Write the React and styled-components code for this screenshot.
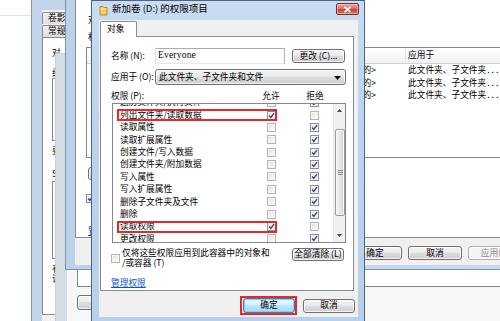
import React from "react";
import styled, { createGlobalStyle, css } from "styled-components";

const FONT = `"Noto Sans CJK SC", "Liberation Sans", sans-serif`;

const GlobalStyle = createGlobalStyle`
  *, *::before, *::after { box-sizing: border-box; }
  html, body { margin: 0; padding: 0; }
  body { background: #ffffff; font-family: ${FONT}; font-size: 8.7px; line-height: 1.2; color: #000; }
`;

const Desktop = styled.div`
  position: relative;
  width: 500px;
  height: 321px;
  overflow: hidden;
  background: #ffffff;
`;

const Explorer = styled.div`
  position: absolute;
  left: 0;
  top: 0;
  width: 500px;
  height: 321px;
  background: #fff;
`;

const AddressBar = styled.div`
  height: 16px;
  border-bottom: 1px solid #dcdfe4;
`;

const Frame = styled.div`
  position: absolute;
  left: ${(p) => p.$x}px;
  top: ${(p) => p.$y}px;
  width: ${(p) => p.$w}px;
  height: ${(p) => p.$h}px;
  display: flex;
  flex-direction: column;
  border: 1px solid ${(p) => p.$edge};
  background: ${(p) => p.$glass};
  padding: 0 ${(p) => p.$r}px ${(p) => p.$b}px ${(p) => p.$l}px;
`;

const Caption = styled.div`
  flex: none;
  position: relative;
  height: ${(p) => p.$h}px;
  display: flex;
  align-items: center;
  gap: 4px;
  font-size: 9.5px;
  color: #000;
`;

const TitleText = styled.span`
  margin-bottom: 4px;
  white-space: nowrap;
`;

const CloseBtn = styled.div`
  position: absolute;
  right: -1px;
  top: 2px;
  width: 23px;
  height: 12px;
  border: 1px solid #7a2f28;
  border-radius: 2px;
  background: linear-gradient(#e8a596 0%, #d8776a 45%, #c34a3c 55%, #d2755d 100%);
  box-shadow: inset 0 0 0 1px rgba(255, 220, 210, 0.55);
  display: flex;
  align-items: center;
  justify-content: center;
`;

const Client = styled.div`
  flex: 1;
  min-height: 0;
  display: flex;
  flex-direction: column;
  background: ${(p) => p.$bg || "#f0f0f0"};
  padding: ${(p) => p.$pad || "0"};
  overflow: hidden;
`;

/* ---------- shared controls ---------- */

const Btn = styled.div`
  position: relative;
  flex: none;
  width: ${(p) => p.$w}px;
  height: ${(p) => p.$h || 14}px;
  border: 1px solid #707070;
  border-radius: 3px;
  background: linear-gradient(#f4f4f4 0%, #ebebeb 45%, #dddddd 50%, #cfcfcf 100%);
  box-shadow: inset 0 0 0 1px rgba(255, 255, 255, 0.75);
  display: flex;
  align-items: center;
  justify-content: center;
  white-space: nowrap;
  color: #000;
  ${(p) =>
    p.$default &&
    css`
      border-color: #3c7fb1;
      background: linear-gradient(#eaf6fd 0%, #d9f0fc 45%, #bee6fd 50%, #a7d9f5 100%);
      box-shadow: inset 0 0 0 1px #7fd0f8;
    `}
  ${(p) =>
    p.$disabled &&
    css`
      color: #8d8d8d;
      border-color: #adb2b5;
      background: #f4f4f4;
    `}
  ${(p) =>
    p.$marked &&
    css`
      &::after {
        content: "";
        position: absolute;
        left: -4px;
        right: -3px;
        top: -3px;
        bottom: -3px;
        border: 2px solid #e6282c;
      }
    `}
`;

const Box = styled.span`
  flex: none;
  width: 9px;
  height: 9px;
  border: 1px solid ${(p) => (p.$on ? "#8e8f8f" : "#b4b4b4")};
  background: linear-gradient(135deg, #dedede 0%, #f2f2f2 60%, #fbfbfb 100%);
  box-shadow: inset 0 0 0 1px #f6f6f6;
  display: inline-flex;
  align-items: center;
  justify-content: center;
  margin-top: ${(p) => p.$mt || 0}px;
`;

function CheckBox({ on, mt }) {
  return (
    <Box $on={on} $mt={mt}>
      {on && (
        <svg width="7" height="7" viewBox="0 0 7 7">
          <path d="M1 3.6 L2.8 5.5 L6 1.2" fill="none" stroke="#2d4a86" strokeWidth="1.4" />
        </svg>
      )}
    </Box>
  );
}

/* ---------- front dialog ---------- */

const FolderIcon = () => (
  <svg width="9" height="11" viewBox="0 0 9 11">
    <path d="M1 1.5 H4 L5 2.5 H8 V10 H1 Z" fill="#f0cd62" stroke="#b98d22" strokeWidth="1" />
    <path d="M1.5 4 H7.5" stroke="#fbe7a3" strokeWidth="1" />
  </svg>
);

const TabStrip = styled.div`
  flex: none;
  height: 15px;
  display: flex;
  position: relative;
  z-index: 1;
`;

const Tab = styled.div`
  width: ${(p) => p.$w}px;
  height: 16px;
  padding-left: 6px;
  display: flex;
  align-items: center;
  background: #fff;
  border: 1px solid #898c95;
  border-bottom: none;
  border-radius: 2px 2px 0 0;
`;

const Panel = styled.div`
  flex: none;
  height: 255px;
  background: #fff;
  border: 1px solid #898c95;
  display: flex;
  flex-direction: column;
  padding: 11px 7px 0 10px;
`;

const FieldRow = styled.div`
  flex: none;
  display: flex;
  align-items: center;
  height: 16px;
  margin-top: ${(p) => p.$mt || 0}px;
`;

const Label = styled.span`
  flex: none;
  width: 44px;
  white-space: nowrap;
`;

const TextBox = styled.div`
  width: 130px;
  height: 16px;
  border: 1px solid #abadb3;
  border-left-color: #dbdfe6;
  border-bottom-color: #e3e9ef;
  background: #fff;
  padding-left: 2px;
  display: flex;
  align-items: center;
  font-family: "Liberation Serif", serif;
  font-size: 9.5px;
  letter-spacing: 0.2px;
`;

const Combo = styled.div`
  position: relative;
  width: 191px;
  height: 16px;
  border: 1px solid #707070;
  border-radius: 3px;
  background: linear-gradient(#f4f4f4 0%, #ebebeb 45%, #dddddd 50%, #cfcfcf 100%);
  box-shadow: inset 0 0 0 1px rgba(255, 255, 255, 0.7);
  padding-left: 3px;
  display: flex;
  align-items: center;
`;

const ComboArrow = styled.span`
  position: absolute;
  right: 4px;
  top: 6px;
  line-height: 0;
`;

const PermHead = styled.div`
  flex: none;
  display: grid;
  grid-template-columns: 136px 48px 40px;
  align-items: center;
  height: 12px;
  margin-top: 5px;
  span:nth-child(n + 2) {
    text-align: center;
  }
`;

const ListBox = styled.div`
  flex: none;
  width: 234px;
  height: 140px;
  margin: 1px 0 0 1px;
  border: 1px solid #828790;
  background: #fff;
  display: flex;
  overflow: hidden;
`;

const RowsArea = styled.div`
  width: 220px;
  overflow: hidden;
`;

const RowsInner = styled.div`
  margin-top: -7.6px;
`;

const PermRow = styled.div`
  position: relative;
  display: grid;
  grid-template-columns: 133px 50px 37px;
  align-items: center;
  height: 12.4px;
  line-height: 12.4px;
  ${(p) =>
    p.$marked &&
    css`
      &::after {
        content: "";
        position: absolute;
        left: 4px;
        width: 160px;
        top: 0.6px;
        height: 12px;
        border: 2px solid #e6282c;
      }
    `}
`;

const PermName = styled.span`
  padding-left: 7px;
  white-space: nowrap;
`;

const Cell = styled.span`
  display: flex;
  justify-content: center;
`;

const VScroll = styled.div`
  width: 12px;
  display: flex;
  flex-direction: column;
  background: #f0f0f0;
  border-left: 1px solid #e8e8e8;
`;

const ScrollBtn = styled.div`
  flex: none;
  height: 13px;
  display: flex;
  align-items: center;
  justify-content: center;
`;

const Track = styled.div`
  flex: 1;
  display: flex;
  flex-direction: column;
  padding: 12px 0 13px 1px;
`;

const Thumb = styled.div`
  flex: 1;
  border: 1px solid #9a9a9a;
  border-radius: 2px;
  background: linear-gradient(90deg, #f3f3f3 0%, #e6e6e6 50%, #d8d8d8 100%);
  box-shadow: inset 0 0 0 1px #fafafa;
  display: flex;
  align-items: center;
  justify-content: center;
`;

const CheckRow = styled.div`
  flex: none;
  display: flex;
  align-items: flex-start;
  height: 20px;
  margin-top: 5px;
`;

const CheckText = styled.span`
  margin-left: 2px;
  display: flex;
  flex-direction: column;
  line-height: 10px;
  white-space: nowrap;
`;

const Link = styled.span`
  flex: none;
  margin-top: 10px;
  line-height: 10px;
  color: #0a58c6;
  text-decoration: underline;
  align-self: flex-start;
`;

const ButtonBar = styled.div`
  flex: none;
  display: flex;
  justify-content: flex-end;
  align-items: center;
  gap: 8px;
  height: 15px;
  margin-top: 7px;
  margin-right: -1px;
`;

/* ---------- background windows ---------- */

const TabRow = styled.div`
  flex: none;
  display: flex;
  height: ${(p) => p.$h}px;
  margin-top: ${(p) => p.$mt || 0}px;
`;

const BackTab = styled.div`
  width: ${(p) => p.$w}px;
  height: 100%;
  padding-left: 5px;
  display: flex;
  align-items: center;
  border: 1px solid #898c95;
  border-bottom: none;
  border-radius: 2px 2px 0 0;
  background: linear-gradient(#f2f2f2, #dedede);
  white-space: nowrap;
`;

const BackPanel = styled.div`
  flex: none;
  height: ${(p) => p.$h}px;
  background: #fff;
  border: 1px solid #898c95;
  border-top-width: ${(p) => (p.$noTop ? 0 : 1)}px;
  border-right: none;
  display: flex;
  flex-direction: column;
  padding-left: ${(p) => p.$pl}px;
  overflow: hidden;
`;

const Line = styled.div`
  flex: none;
  height: 10px;
  line-height: 10px;
  margin-top: ${(p) => p.$mt || 0}px;
  margin-left: ${(p) => p.$ml || 0}px;
  white-space: nowrap;
  color: ${(p) => p.$color || "#000"};
  text-decoration: ${(p) => (p.$link ? "underline" : "none")};
`;

const PlainList = styled.div`
  flex: none;
  width: ${(p) => p.$w}px;
  height: ${(p) => p.$h}px;
  margin-top: ${(p) => p.$mt || 0}px;
  border: 1px solid #828790;
  background: #fff;
`;

const ListView = styled.div`
  flex: none;
  width: 433px;
  height: 111px;
  margin-top: 5px;
  border: 1px solid #828790;
  background: #fff;
  overflow: hidden;
`;

const LVRow = styled.div`
  display: flex;
  height: ${(p) => (p.$head ? 16 : 12.5)}px;
  align-items: center;
  white-space: nowrap;
  ${(p) =>
    p.$head &&
    css`
      background: linear-gradient(#ffffff, #eef0f3);
      border-bottom: 1px solid #d5d5d5;
    `}
`;

const LVCell = styled.span`
  flex: none;
  width: ${(p) => p.$w}px;
  padding-left: 2px;
  overflow: hidden;
  height: 100%;
  display: flex;
  align-items: center;
  justify-content: ${(p) => (p.$end ? "flex-end" : "flex-start")};
  padding-right: ${(p) => (p.$end ? 30 : 0)}px;
  ${(p) => p.$sep && css`border-right: 1px solid #e3e5e8;`}
`;

const Dots = styled.span`
  letter-spacing: 2px;
  margin-left: 1px;
`;

const BtnRow = styled.div`
  flex: none;
  display: flex;
  gap: ${(p) => p.$gap || 6}px;
  justify-content: ${(p) => p.$justify || "flex-start"};
  margin-top: ${(p) => p.$mt || 0}px;
  margin-left: ${(p) => p.$ml || 0}px;
  padding-right: ${(p) => p.$pr || 0}px;
`;

const perms = [
  ["遍历文件夹/执行文件", false, true],
  ["列出文件夹/读取数据", true, false, true],
  ["读取属性", false, true],
  ["读取扩展属性", false, true],
  ["创建文件/写入数据", false, true],
  ["创建文件夹/附加数据", false, true],
  ["写入属性", false, true],
  ["写入扩展属性", false, true],
  ["删除子文件夹及文件", false, true],
  ["删除", false, true],
  ["读取权限", true, false, true],
  ["更改权限", false, true],
  ["取得所有权", false, true],
];

const lvCols = [40, 100, 80, 99];

export default function App() {
  return (
    <>
      <GlobalStyle />
      <Desktop>
        <Explorer>
          <AddressBar />
        </Explorer>

        {/* Properties window */}
        <Frame
          $x={31}
          $y={-30}
          $w={600}
          $h={400}
          $edge="#8197b0"
          $glass="linear-gradient(90deg, #c2d4e8, #d2e0ef)"
          $l={10}
          $r={10}
          $b={8}
        >
          <Caption $h={39} />
          <Client $pad="2px 0 0 0">
            <TabRow $h={12}>
              <BackTab $w={40}>卷影</BackTab>
            </TabRow>
            <TabRow $h={12} $mt={1}>
              <BackTab $w={40}>常规</BackTab>
            </TabRow>
            <BackPanel $h={278} $pl={9}>
              <Line $mt={10}>对</Line>
              <Line $mt={10}>组</Line>
              <PlainList $w={240} $h={63} $mt={0} />
              <Line $mt={5}>要</Line>
              <Line $mt={13}>S</Line>
              <PlainList $w={240} $h={78} $mt={2} />
              <Line $mt={5}>有</Line>
              <Line>请</Line>
            </BackPanel>
          </Client>
        </Frame>

        {/* Middle window */}
        <Frame
          $x={55}
          $y={53}
          $w={520}
          $h={300}
          $edge="#c9cfd6"
          $glass="linear-gradient(90deg, #d6dde5, #eef1f4)"
          $l={11}
          $r={10}
          $b={8}
        >
          <Caption $h={25} />
          <Client $bg="#f7f7f7" $pad="0 0 0 10px">
            <PlainList $w={480} $h={208} $mt={0} />
            <BtnRow $mt={8}>
              <Btn $w={60} $h={15} />
            </BtnRow>
          </Client>
        </Frame>

        {/* Advanced security settings window */}
        <Frame
          $x={65}
          $y={-30}
          $w={475}
          $h={300}
          $edge="#7d93ad"
          $glass="linear-gradient(90deg, #bcd1ea, #c8daee)"
          $l={9}
          $r={9}
          $b={4}
        >
          <Caption $h={29} />
          <Client>
            <BackPanel $h={238} $pl={10} $noTop>
              <Line $mt={15} $ml={2}>对</Line>
              <Line $mt={7} $ml={2}>权</Line>
              <ListView>
                <LVRow $head>
                  <LVCell $w={lvCols[0]} $sep />
                  <LVCell $w={lvCols[1]} $sep />
                  <LVCell $w={lvCols[2]} $sep />
                  <LVCell $w={lvCols[3]} $sep />
                  <LVCell $w={100}>应用于</LVCell>
                </LVRow>
                {[0, 1, 2].map((i) => (
                  <LVRow key={i}>
                    <LVCell $w={lvCols[0] + lvCols[1] + lvCols[2]} />
                    <LVCell $w={lvCols[3]} $end>
                      的&gt;
                    </LVCell>
                    <LVCell $w={100}>
                      此文件夹、子文件夹<Dots>...</Dots>
                    </LVCell>
                  </LVRow>
                ))}
              </ListView>
              <BtnRow $mt={9} $ml={2}>
                <Btn $w={56} $h={13} />
              </BtnRow>
              <FieldRow $mt={10}>
                <CheckBox on={true} />
              </FieldRow>
              <Line $mt={20} $ml={2} $color="#0a58c6" $link>
                管
              </Line>
            </BackPanel>
            <BtnRow $mt={8} $justify="flex-end" $pr={8}>
              <Btn $w={54}>确定</Btn>
              <Btn $w={54}>取消</Btn>
              <Btn $w={54} $disabled>应用(A)</Btn>
            </BtnRow>
          </Client>
        </Frame>

        {/* Permission entry dialog (front) */}
        <Frame
          $x={91}
          $y={0}
          $w={274}
          $h={326}
          $edge="#4a6482"
          $glass="linear-gradient(180deg, #c9dcf1 0%, #bcd3ed 40%, #b8d0eb 100%)"
          $l={7}
          $r={6}
          $b={8}
        >
          <Caption $h={19}>
            <FolderIcon />
            <TitleText>新加卷 (D:) 的权限项目</TitleText>
            <CloseBtn>
              <svg width="9" height="7" viewBox="0 0 9 7">
                <path d="M1.5 0.8 L7.5 6.2 M7.5 0.8 L1.5 6.2" stroke="#fff" strokeWidth="1.7" />
              </svg>
            </CloseBtn>
          </Caption>
          <Client $pad="1px 4px 0 1px">
            <TabStrip>
              <Tab $w={37}>对象</Tab>
            </TabStrip>
            <Panel>
              <FieldRow>
                <Label>名称 (N):</Label>
                <TextBox>Everyone</TextBox>
                <Btn $w={53} style={{ marginLeft: 7 }}>
                  更改 (C)...
                </Btn>
              </FieldRow>
              <FieldRow $mt={5}>
                <Label>应用于 (O):</Label>
                <Combo>
                  此文件夹、子文件夹和文件
                  <ComboArrow>
                    <svg width="7" height="4" viewBox="0 0 7 4">
                      <path d="M0 0 H7 L3.5 4 Z" fill="#111" />
                    </svg>
                  </ComboArrow>
                </Combo>
              </FieldRow>
              <PermHead>
                <span>权限 (P):</span>
                <span>允许</span>
                <span>拒绝</span>
              </PermHead>
              <ListBox>
                <RowsArea>
                  <RowsInner>
                    {perms.map(([name, allow, deny, marked]) => (
                      <PermRow key={name} $marked={marked}>
                        <PermName>{name}</PermName>
                        <Cell>
                          <CheckBox on={allow} />
                        </Cell>
                        <Cell>
                          <CheckBox on={deny} />
                        </Cell>
                      </PermRow>
                    ))}
                  </RowsInner>
                </RowsArea>
                <VScroll>
                  <ScrollBtn>
                    <svg width="5" height="3" viewBox="0 0 5 3">
                      <path d="M0 3 L2.5 0 L5 3 Z" fill="#4a4a4a" />
                    </svg>
                  </ScrollBtn>
                  <Track>
                    <Thumb>
                      <svg width="5" height="5" viewBox="0 0 5 5">
                        <path d="M0 0.5 H5 M0 2.5 H5 M0 4.5 H5" stroke="#8a8a8a" strokeWidth="1" />
                      </svg>
                    </Thumb>
                  </Track>
                  <ScrollBtn>
                    <svg width="5" height="3" viewBox="0 0 5 3">
                      <path d="M0 0 L2.5 3 L5 0 Z" fill="#4a4a4a" />
                    </svg>
                  </ScrollBtn>
                </VScroll>
              </ListBox>
              <CheckRow>
                <CheckBox on={false} mt={6} />
                <CheckText>
                  <span>仅将这些权限应用到此容器中的对象和</span>
                  <span>/或容器 (T)</span>
                </CheckText>
                <Btn $w={52} $h={13} style={{ marginLeft: "auto", marginRight: 2 }}>
                  全部清除 (L)
                </Btn>
              </CheckRow>
              <Link>管理权限</Link>
            </Panel>
            <ButtonBar>
              <Btn $w={52} $h={15} $default $marked>
                确定
              </Btn>
              <Btn $w={52}>取消</Btn>
            </ButtonBar>
          </Client>
        </Frame>
      </Desktop>
    </>
  );
}
